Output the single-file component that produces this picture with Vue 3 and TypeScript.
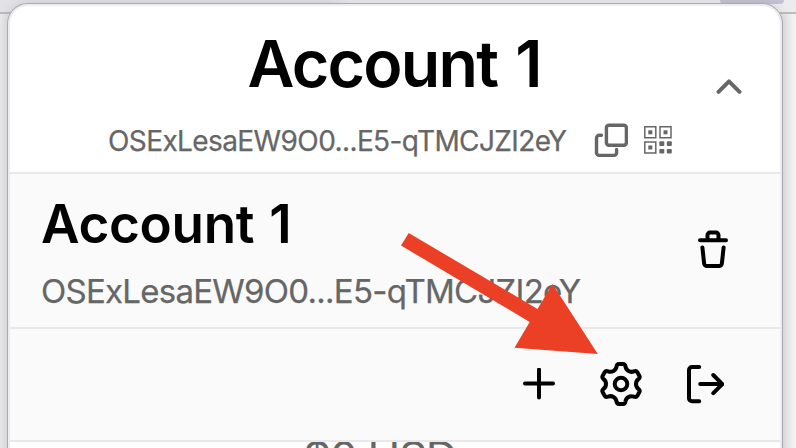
<script setup lang="ts">
import { ref } from 'vue'

const name = ref<string>('Account 1')
const address = ref<string>('OSExLesaEW9O0...E5-qTMCJZI2eY')

// One sixth of the gear outline, repeated around the centre
const sector = (i: number): string => {
  const p = (x: number, y: number): string => {
    const a = (i * Math.PI) / 3
    return `${(x * Math.cos(a) - y * Math.sin(a)).toFixed(2)} ${(x * Math.sin(a) + y * Math.cos(a)).toFixed(2)}`
  }
  return `${i === 0 ? 'M' : 'L'}${p(-2, -20)}L${p(2, -20)}Q${p(4, -20)} ${p(4.5, -17.5)}C${p(5, -13.5)} ${p(9.2, -11.1)} ${p(12.9, -12.6)}Q${p(15.3, -13.5)} ${p(16.32, -11.73)}`
}
const gear = [0, 1, 2, 3, 4, 5].map(sector).join('') + 'Z'
</script>

<template>
  <div class="page">
    <div class="toolbar"><span class="tab"></span></div>
    <main class="popup">
      <header class="header">
        <div class="current">
          <h1>{{ name }}</h1>
          <div class="line">
            <span class="address">{{ address }}</span>
            <svg class="copy" width="34" height="34" viewBox="0 0 34 34">
              <rect x="12.4" y="2.2" width="20" height="20" rx="2.5" />
              <path d="M7.5 12.3H5.2a2.7 2.7 0 0 0-2.7 2.7v14.7a2.7 2.7 0 0 0 2.7 2.7h14.7a2.7 2.7 0 0 0 2.7-2.7v-3.2" />
            </svg>
            <svg class="qr" width="28" height="28" viewBox="0 0 28 28">
              <path d="M.8.8h11v11H.8zM16 .8h11v11H16zM.8 16h11v11H.8z" />
              <g>
                <rect x="4.3" y="4.3" width="4" height="4" />
                <rect x="19.5" y="4.3" width="4" height="4" />
                <rect x="4.3" y="19.5" width="4" height="4" />
                <rect x="15.3" y="15.3" width="5" height="4.6" rx="1" />
                <rect x="22.8" y="15.3" width="5" height="4.6" rx="1" />
                <rect x="15.3" y="23" width="5" height="4.6" rx="1" />
                <rect x="22.8" y="23" width="5" height="4.6" rx="1" />
              </g>
            </svg>
          </div>
        </div>
        <svg class="chevron" width="26" height="16" viewBox="0 0 26 16"><path d="M2.5 12.8 13 2.3l10.5 10.5" /></svg>
      </header>
      <section class="account">
        <div class="details">
          <h2>{{ name }}</h2>
          <span class="address">{{ address }}</span>
        </div>
        <svg class="icon" width="30" height="38" viewBox="0 0 30 38">
          <path d="M2 10.2h26M9.5 10V5a2.4 2.4 0 0 1 2.4-2.4h6.2A2.4 2.4 0 0 1 20.5 5v5M4.4 17.5l1.7 15.8a3 3 0 0 0 3 2.8h11.8a3 3 0 0 0 3-2.8l1.7-15.8" />
        </svg>
      </section>
      <section class="actions">
        <svg class="icon plus" width="32" height="32" viewBox="0 0 32 32"><path d="M2 15.5h28M16 1.5v28" /></svg>
        <svg class="icon" width="44" height="46" viewBox="-22 -23 44 46"><path :d="gear" /><circle r="6.3" /></svg>
        <svg class="icon" width="38" height="40" viewBox="0 0 38 40"><path d="M13.2 3H6a3 3 0 0 0-3 3v28.3a3 3 0 0 0 3 3h7.2M14.2 20.1h22M27.3 11l9 9.1-9 9.1" /></svg>
      </section>
      <div class="balance"><span>$0 USD</span></div>
    </main>
    <svg class="arrow" width="796" height="448" viewBox="0 0 796 448"><path d="M408.7 233 537.5 309 552.5 284 597.8 354 514.5 347.8 529.7 322 401 245.5Z" /></svg>
  </div>
</template>

<style>
body { overflow: hidden; }
</style>

<style scoped>
.page {
  position: relative;
  width: 796px;
  height: 448px;
  overflow: hidden;
  box-sizing: border-box;
  padding: 4px 14px 0 8px;
  background: linear-gradient(90deg, #e8e8e8, #e2e2e2 8px, #e2e2e2 782px, #f4f4f4);
  font-family: Inter, sans-serif;
}
.toolbar {
  position: absolute;
  inset: 0 0 auto;
  height: 12px;
  background: linear-gradient(90deg, #e3e2e7 0 330px, #ececf0 350px 100%);
  border-bottom: 2px solid #bcbcbf;
}
.tab {
  position: absolute;
  left: 720px;
  width: 64px;
  height: 4px;
  border-radius: 0 0 8px 8px;
  background: #c4c3d1;
}
.popup {
  position: relative;
  box-sizing: border-box;
  width: 774px;
  height: 470px;
  border: 2px solid #ececf2;
  border-radius: 20px 20px 0 0;
  background: #fff;
  box-shadow: 0 0 0 1px #aaaab0, 0 0 12px #0002;
  overflow: hidden;
}
.header {
  box-sizing: border-box;
  height: 168px;
  display: flex;
  align-items: flex-start;
  border-bottom: 2px solid #e8e8e8;
  padding: 24px 38px 0 98px;
}
.current { flex: 1; }
h1, h2 {
  margin: 0;
  color: #000;
  font-weight: 600;
  white-space: nowrap;
}
h1 { font-size: 64.5px; line-height: 68px; padding-left: 139.5px; letter-spacing: -1.75px; word-spacing: 3.5px; }
.line { display: flex; align-items: center; height: 34px; margin-top: 25px; }
.address { color: #666; -webkit-text-stroke: 0.25px #666; font-size: 28px; line-height: 34px; white-space: nowrap; }
.line .address { width: 486px; padding-top: 2px; letter-spacing: -0.6px; }
.copy, .chevron { fill: none; stroke: #666; stroke-width: 3.4; stroke-linecap: round; stroke-linejoin: round; }
.qr { margin-left: 16px; fill: none; stroke: #666; stroke-width: 1.5; }
.qr g { fill: #666; stroke: none; }
.chevron { margin-top: 49px; stroke-width: 4; }
.account {
  box-sizing: border-box;
  height: 155px;
  display: flex;
  justify-content: space-between;
  padding: 18px 52px 0 31px;
  background: #fafafa;
  border-bottom: 2px solid #e8e8e8;
}
h2 { font-size: 53px; line-height: 64px; letter-spacing: -0.3px; word-spacing: 2px; }
.details .address { display: block; margin-top: 15px; font-size: 33px; line-height: 40px; letter-spacing: -0.74px; }
.account .icon { margin-top: 38px; }
.icon { fill: none; stroke: #000; stroke-width: 4; stroke-linecap: round; stroke-linejoin: round; }
.actions {
  box-sizing: border-box;
  height: 113px;
  display: flex;
  align-items: center;
  justify-content: flex-end;
  gap: 43px;
  padding: 0 56px 2px 0;
  background: #fafafa;
  border-bottom: 2px solid #e8e8e8;
}
.plus { margin-right: 1.5px; }
.balance { height: 28px; overflow: hidden; padding-left: 293px; color: #666; font-size: 44px; line-height: 48px; letter-spacing: -1.3px; }
.balance span { display: block; margin-top: -9px; }
.arrow { position: absolute; top: 0; left: 0; fill: #eb4026; }
</style>
